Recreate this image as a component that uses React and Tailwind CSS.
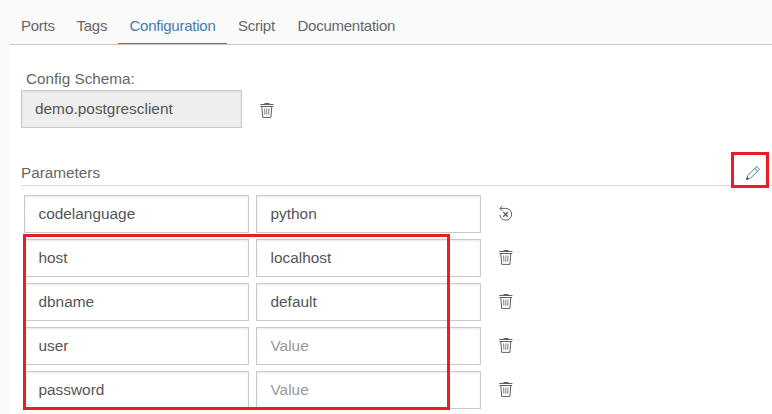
const TABS = [
  { label: "Ports", box: "ml-[11px] w-[33.5px]" },
  { label: "Tags", box: "ml-[22px] w-[30.5px]" },
  { label: "Configuration", box: "ml-[11px] w-[109px] pl-[11.5px] text-[#427cac] border-b border-[#427cac]" },
  { label: "Script", box: "ml-[11px] w-[38px]" },
  { label: "Documentation", box: "ml-[21.5px] w-[100px]" },
];

const ROWS = [
  { name: "codelanguage", value: "python", inherited: true },
  { name: "host", value: "localhost" },
  { name: "dbname", value: "default" },
  { name: "user", value: "" },
  { name: "password", value: "" },
];

function TrashIcon() {
  return (
    <svg width="14" height="16" viewBox="0 0 14 16" fill="none" stroke="#606060">
      <path d="M4.5 1.5H9.5M0.3 2.5H13.5" strokeWidth="1" />
      <path d="M0.5 4.5H13.2" strokeWidth="1" />
      <path d="M1.8 4.5L2.7 15.4H10.9L11.8 4.5" strokeWidth="1" />
      <path d="M4.6 6.5L4.9 12.7M6.8 6.5V12.7M9 6.5L8.7 12.7" strokeWidth="0.8" />
    </svg>
  );
}

function ResetIcon() {
  return (
    <svg width="14" height="17" viewBox="0 0 14 17" fill="none" stroke="#606060">
      <path d="M1 3.4H6.7A5.9 5.9 0 1 1 0.9 9.8" strokeWidth="1" />
      <path d="M3.4 0.9L0.9 3.4L3.4 5.9" strokeWidth="1" />
      <path d="M4.2 7.1L9 11.7M9 7.1L4.2 11.7" strokeWidth="1.4" />
    </svg>
  );
}

function PencilIcon() {
  return (
    <svg width="14" height="14" viewBox="0 0 14 14" fill="none" stroke="#427cac" strokeWidth="1">
      <path d="M0.8 13.2L1.8 9.5L10.2 1.1Q10.8 0.5 11.4 1.1L12.9 2.6Q13.5 3.2 12.9 3.8L4.5 12.2Z" />
      <path d="M8.8 2.5L11.5 5.2" />
      <path d="M0.5 13.5L1.2 11.4L2.6 12.8Z" fill="#555" stroke="#555" />
    </svg>
  );
}

function Field({ text }) {
  return (
    <div
      className={`h-[38px] w-[225px] border border-[#c9c9c9] bg-white pl-[13.5px] text-[15.4px] leading-[36px] shadow-[inset_0_1px_2px_#e8e8e8] ${
        text ? "text-[#555]" : "text-[#999]"
      }`}
    >
      {text || "Value"}
    </div>
  );
}

export default function App() {
  return (
    <div className="relative h-[414px] w-[772px] overflow-hidden bg-[#fafafa] pl-[10px] font-['Liberation_Sans',Arial,sans-serif] text-[15.3px] text-[#666]">
      <nav className="flex h-[45px] border-b border-[#c9c9c9] pt-2 text-[15px] tracking-[-0.25px]">
        {TABS.map((tab) => (
          <div key={tab.label} className={`h-9 whitespace-nowrap leading-[36px] ${tab.box}`}>
            {tab.label}
          </div>
        ))}
      </nav>
      <main className="h-[369px] bg-white pl-[11px] pt-[24px]">
        <div className="h-[21px] pl-[5px] leading-[20px]">Config Schema:</div>
        <div className="flex h-[38px]">
          <div className="w-[221px] border border-[#c9c9c9] bg-[#eee] pl-[13px] text-[15.4px] leading-[36px] text-[#555] shadow-[inset_0_1px_2px_#dedede]">
            demo.postgresclient
          </div>
          <div className="ml-[18px] mt-[12px]">
            <TrashIcon />
          </div>
        </div>
        <div className="mt-[32px] flex h-[26px] justify-between border-b border-[#d9d9d9] pr-[12px]">
          <span className="leading-[26px]">Parameters</span>
          <span className="mt-[6px]">
            <PencilIcon />
          </span>
        </div>
        <div className="flex flex-col gap-[6px] pl-[3px] pt-[9px]">
          {ROWS.map((row) => (
            <div key={row.name} className="flex">
              <Field text={row.name} />
              <div className="ml-[7px]">
                <Field text={row.value} />
              </div>
              <div className="ml-[18px] mt-[10px]">{row.inherited ? <ResetIcon /> : <TrashIcon />}</div>
            </div>
          ))}
        </div>
      </main>
      <div className="absolute left-[23px] top-[234px] h-[176px] w-[427px] border-[3px] border-[#ed1c24]" />
      <div className="absolute left-[731px] top-[152px] h-[36px] w-[38px] border-[3px] border-[#ed1c24]" />
    </div>
  );
}
